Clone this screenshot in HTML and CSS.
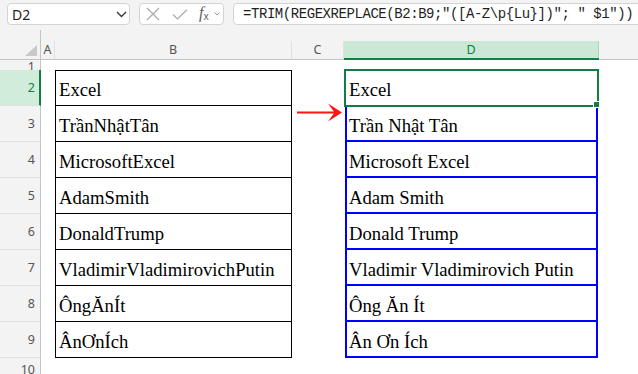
FILE: index.html
```html
<!DOCTYPE html>
<html lang="vi">
<head>
    <meta charset="UTF-8">
    <title>REGEXREPLACE</title>
    <link rel="stylesheet" href="styles.css">
</head>
<body>
    <div class="app">
        <div class="toolbar">
            <div class="namebox">
                <span>D2</span>
                <svg width="11" height="7" viewBox="0 0 11 7"><polyline points="1,1 5.5,5.5 10,1" fill="none" stroke="#333" stroke-width="1.3"/></svg>
            </div>
            <div class="fxbtns">
                <svg class="ic-x" width="14" height="14" viewBox="0 0 14 14"><path d="M1 1L13 13M13 1L1 13" stroke="#a9a9a9" stroke-width="1.2"/></svg>
                <svg class="ic-ok" width="16" height="11" viewBox="0 0 16 11"><polyline points="1,5.5 5.5,10 15,0.8" fill="none" stroke="#a9a9a9" stroke-width="1.2"/></svg>
                <span class="fx"><i>f</i><sub>x</sub></span>
                <svg class="ic-dd" width="6" height="4" viewBox="0 0 6 4"><polyline points="0.5,0.5 3,3 5.5,0.5" fill="none" stroke="#9a9a9a" stroke-width="1"/></svg>
            </div>
            <div class="formula">=TRIM(REGEXREPLACE(B2:B9;"([A-Z\p{Lu}])"; " $1"))</div>
        </div>

        <div class="sheet">
            <!-- column headers -->
            <div class="corner"><svg width="12" height="11" viewBox="0 0 12 11"><polygon points="12,0 12,11 0,11" fill="#c8c8c8"/></svg></div>
            <div class="ch"><span class="lbl">A</span></div>
            <div class="ch"><span class="lbl">B</span></div>
            <div class="ch"><span class="lbl">C</span></div>
            <div class="ch on"><span class="lbl">D</span></div>
            <div class="ch"><span class="lbl last"></span></div>

            <!-- row 1 -->
            <div class="rh first"><span>1</span></div>
            <div></div><div></div><div></div><div></div><div></div>

            <div class="rh on">2</div>
            <div></div><div class="cell src top">Excel</div><div></div>
            <div class="cell sel">Excel<span class="handle"></span></div><div></div>

            <div class="rh">3</div>
            <div></div><div class="cell src">TrầnNhậtTân</div><div></div>
            <div class="cell out">Trần Nhật Tân</div><div></div>

            <div class="rh">4</div>
            <div></div><div class="cell src">MicrosoftExcel</div><div></div>
            <div class="cell out">Microsoft Excel</div><div></div>

            <div class="rh">5</div>
            <div></div><div class="cell src">AdamSmith</div><div></div>
            <div class="cell out">Adam Smith</div><div></div>

            <div class="rh">6</div>
            <div></div><div class="cell src">DonaldTrump</div><div></div>
            <div class="cell out">Donald Trump</div><div></div>

            <div class="rh">7</div>
            <div></div><div class="cell src">VladimirVladimirovichPutin</div><div></div>
            <div class="cell out">Vladimir Vladimirovich Putin</div><div></div>

            <div class="rh">8</div>
            <div></div><div class="cell src">ÔngĂnÍt</div><div></div>
            <div class="cell out">Ông Ăn Ít</div><div></div>

            <div class="rh">9</div>
            <div></div><div class="cell src">ÂnƠnÍch</div><div></div>
            <div class="cell out">Ân Ơn Ích</div><div></div>

            <div class="rh tail"><span>10</span></div>
            <div></div><div></div><div></div><div></div><div></div>
        </div>

        <!-- mui ten do -->
        <svg class="arrow" width="48" height="24" viewBox="0 0 48 24">
            <line x1="1" y1="12.5" x2="40" y2="12.5" stroke="#ff1414" stroke-width="2"/>
            <polygon points="46,12.5 32,3.5 38.5,12.5 32,21.5" fill="#ff1414"/>
        </svg>
    </div>
</body>
</html>
```
FILE: styles.css
```css
*{
    margin: 0;
    padding: 0;
    box-sizing: border-box;
}
body{
    width: 638px;
    height: 374px;
    overflow: hidden;
    background: #fff;
    font-family: "Segoe UI", "Noto Sans", sans-serif;
}
.app{
    position: relative;
    width: 638px;
    height: 374px;
    overflow: hidden;
}

/* thanh cong thuc */
.toolbar{
    height: 30px;
    background: #f3f3f3;
    display: flex;
    align-items: flex-start;
    gap: 9px;
    padding: 3px 0 0 7px;
}
.namebox{
    width: 123px;
    height: 22px;
    background: #fff;
    border: 1px solid #d4d4d4;
    border-radius: 4px;
    display: flex;
    align-items: center;
    justify-content: space-between;
    padding: 0 2px 0 4px;
    font-size: 14px;
    color: #242424;
}
.fxbtns{
    width: 85px;
    height: 22px;
    background: #fff;
    border: 1px solid #d4d4d4;
    border-radius: 4px;
    display: flex;
    align-items: center;
    padding-left: 6px;
}
.ic-ok{
    margin-left: 12px;
}
.fx{
    margin-left: 11px;
    color: #606060;
    font-family: "Liberation Serif", serif;
    line-height: 14px;
}
.fx i{
    font-size: 16px;
}
.fx sub{
    font-family: "Noto Sans", sans-serif;
    font-style: normal;
    font-size: 10px;
    vertical-align: -2px;
}
.ic-dd{
    margin-left: 5px;
}
.formula{
    flex: 1;
    height: 22px;
    margin-right: -20px;
    background: #fff;
    border: 1px solid #d4d4d4;
    border-radius: 4px;
    padding-left: 9px;
    font-family: "Liberation Mono", monospace;
    font-size: 14px;
    letter-spacing: -0.44px;
    line-height: 20px;
    color: #1e1e1e;
    white-space: nowrap;
}

/* bang tinh */
.sheet{
    display: grid;
    grid-template-columns: 41px 14px 237px 52px 255px 1fr;
    grid-template-rows: 30px 10px repeat(8, 36px) 16px;
}
.corner{
    background: #f3f3f3;
    border-right: 1px solid #c4c4c4;
    border-bottom: 1px solid #c4c4c4;
    display: flex;
    justify-content: flex-end;
    align-items: flex-end;
    padding: 0 3px 3px 0;
}
.ch{
    background: #f3f3f3;
    border-bottom: 1px solid #c4c4c4;
    padding-top: 11px;
    display: flex;
}
.ch .lbl{
    flex: 1;
    border-right: 1px solid #e0e0e0;
    text-align: center;
    font-size: 12.5px;
    line-height: 18px;
    color: #555;
}
.ch .last{
    border-right: 0;
}
.ch.on{
    border-bottom: 2px solid #137e43;
}
.ch.on .lbl{
    background: #cae8d5;
    border-right: 1px solid #a9d6b9;
    color: #137e43;
    line-height: 17px;
}
.rh{
    background: #f3f3f3;
    border-right: 1px solid #c4c4c4;
    border-bottom: 1px solid #e0e0e0;
    display: flex;
    align-items: center;
    justify-content: flex-end;
    padding-right: 5px;
    font-size: 12.5px;
    color: #555;
}
.rh.first,
.rh.tail{
    align-items: flex-start;
    overflow: hidden;
    border-bottom: 0;
}
.rh.first span{
    line-height: 14px;
}
.rh.tail span{
    line-height: 24px;
}
.rh.on{
    background: #d2ecdb;
    border-right: 2px solid #137e43;
    padding-right: 4px;
    color: #137e43;
}

/* o du lieu */
.cell{
    display: flex;
    align-items: flex-end;
    font-family: "Liberation Serif", serif;
    font-size: 18.67px;
    line-height: 21px;
    color: #000;
    white-space: nowrap;
}
.src{
    border: 1px solid #000;
    border-top: 0;
    padding: 0 0 5px 3px;
}
.src.top{
    border-top: 1px solid #000;
}
.out{
    margin: 0 1px;
    border: 2px solid #0000ff;
    border-top: 0;
    padding: 0 0 4px 2px;
}
.sel{
    position: relative;
    margin: -1px 0;
    border: 2px solid #137e43;
    padding: 0 0 5px 3px;
}
.handle{
    position: absolute;
    right: -2px;
    bottom: -2px;
    width: 5px;
    height: 5px;
    background: #137e43;
    box-shadow: 0 0 0 1px #fff;
}

.arrow{
    position: absolute;
    left: 296px;
    top: 100px;
}
```
